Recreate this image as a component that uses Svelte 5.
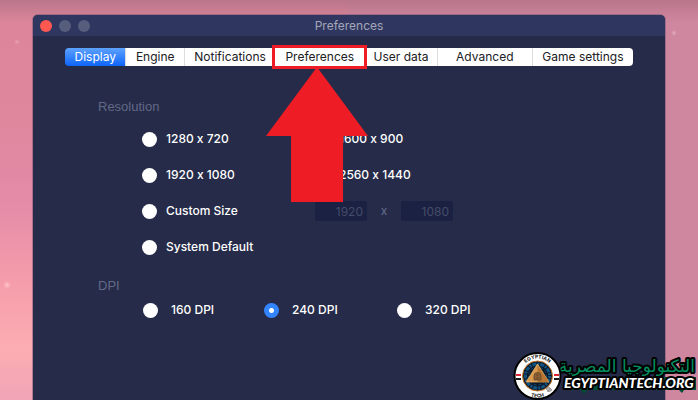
<script>
  const tabs = [
    { name: 'Display', width: 61 },
    { name: 'Engine', width: 58 },
    { name: 'Notifications', width: 91 },
    { name: 'Preferences', width: 90 },
    { name: 'User data', width: 72 },
    { name: 'Advanced', width: 95 },
    { name: 'Game settings', width: 101 }
  ];
  const dpis = [160, 240, 320];
  let active = $state('Display');
  let resolution = $state('');
  let dpi = $state(240);
</script>

<div class="desktop">
  <main class="window">
    <header>
      <div class="lights">
        <button class="close" aria-label="Close"></button>
        <button aria-label="Minimize"></button>
        <button aria-label="Zoom"></button>
      </div>
      <h1>Preferences</h1>
    </header>

    <nav>
      {#each tabs as tab}
        <button
          class:active={active === tab.name}
          class:marked={tab.name === 'Preferences'}
          style="flex-grow: {tab.width}"
          onclick={() => (active = tab.name)}>{tab.name}</button>
      {/each}
    </nav>

    <section class="resolution">
      <h2>Resolution</h2>
      <div class="grid">
        <label><input type="radio" name="res" value="720" bind:group={resolution} />1280 x 720</label>
        <label><input type="radio" name="res" value="900" bind:group={resolution} />1600 x 900</label>
        <label><input type="radio" name="res" value="1080" bind:group={resolution} />1920 x 1080</label>
        <label><input type="radio" name="res" value="1440" bind:group={resolution} />2560 x 1440</label>
        <label><input type="radio" name="res" value="custom" bind:group={resolution} />Custom Size</label>
        <div class="size">
          <input type="text" aria-label="Width" value="1920" disabled />
          <span>x</span>
          <input type="text" aria-label="Height" value="1080" disabled />
        </div>
        <label><input type="radio" name="res" value="default" bind:group={resolution} />System Default</label>
      </div>
    </section>

    <section class="dpi">
      <h2>DPI</h2>
      <div class="row">
        {#each dpis as value}
          <label><input type="radio" name="dpi" {value} bind:group={dpi} />{value} DPI</label>
        {/each}
      </div>
    </section>

    <svg class="arrow" width="104" height="136" viewBox="0 0 104 136" aria-hidden="true">
      <path d="M51 0 102 69H77V135H25V69H0Z" fill="#ee1c25" />
    </svg>
  </main>

  <svg class="mark" width="188" height="52" viewBox="0 0 188 52">
    <defs>
      <path id="top" d="M11 27a17.500 17.500 0 0 1 35 0" />
      <path id="bottom" d="M7 27a21.500 21.500 0 0 0 43 0" />
    </defs>
    <path d="M58 28H187V41H175L173 44 170 41H78L75 45 72 41H58Z" fill="#004c36" />
    <text class="arabic" x="186" y="23" direction="rtl">التكنولوجيا المصرية</text>
    <circle cx="28.500" cy="27" r="23" fill="#fff" stroke="#000" stroke-width="2" />
    <circle cx="28.500" cy="27" r="15" fill="#0a1828" stroke="#c97928" stroke-width="1" />
    <circle cx="28.500" cy="27" r="12" fill="none" stroke="#125583" stroke-width="3" stroke-dasharray="2 1 4 1" />
    <circle cx="28.500" cy="27" r="9" fill="none" stroke="#17466b" stroke-width="1" stroke-dasharray="3 2" />
    <path d="M28.500 15 40 33H17Z" fill="#d99a4e" stroke="#f0be74" stroke-width=".7" />
    <path d="M28.500 16v17H40Z" fill="#b87632" />
    <path d="M25 27a3.500 3.500 0 1 1 7 0v4h-7Zm2-1h3m-3 3h3" fill="#8f602f" stroke="#57452e" stroke-width=".8" />
    <path d="M7 25h5v2H7ZM45 25h5v2h-5Z" fill="#df2534" />
    <path d="M7 29h5v2H7ZM45 29h5v2h-5Z" fill="#161616" />
    <text class="ring"><textPath href="#top" startOffset="50%">EGYPTIAN</textPath></text>
    <text class="ring"><textPath href="#bottom" startOffset="50%">TECH</textPath></text>
    <path d="M37 40l3-2 3 3-3 2Zm1 3 4-4" fill="#bbb" stroke="#777" stroke-width=".6" />
    <text class="site" x="55" y="39">EGYPTIANTECH.ORG</text>
  </svg>
</div>

<style>
  :global(body) { margin: 0; }
  * { box-sizing: border-box; }
  .desktop {
    position: relative;
    display: flex;
    min-height: 100vh;
    padding: 15px 33px 0 33px;
    overflow: hidden;
    font: 12px/16px Inter, "Liberation Sans", sans-serif;
    font-feature-settings: "calt" 0;
    background:
      radial-gradient(circle at 7px 285px, #ffc4c8 0, transparent 4px),
      radial-gradient(circle at 17px 42px, #e9a0b0 0, transparent 3px),
      radial-gradient(circle at 674px 33px, #dfaabd 0, transparent 3px),
      linear-gradient(#b9768b, transparent 22px),
      linear-gradient(90deg, transparent 50%, #cf869f 50%),
      linear-gradient(#dc8599 0, #df879d 120px, #e38ba8 200px, #f49baa 275px, #fcadb3 350px, #f0a4b5 400px);
  }
  .window {
    position: relative;
    flex: 1;
    background: #252b48;
    border-radius: 5px 5px 0 0;
    box-shadow: 0 0 0 1px #71516f80;
  }
  header {
    display: grid;
    grid-template-columns: 1fr auto 1fr;
    align-items: center;
    height: 21px;
    padding: 0 7px;
    background: #2f365f;
    border-radius: 5px 5px 0 0;
  }
  h1 { margin: 0; font-size: 12px; font-weight: 400; color: #a4a7b9; }
  .lights { display: flex; gap: 7px; }
  .lights button { width: 12px; height: 12px; padding: 0; border: 0; border-radius: 50%; background: #565d7d; }
  .lights .close { background: #ff5850; }
  nav { display: flex; height: 18px; margin: 12px 32px 0; }
  nav button {
    flex: 1 1 0;
    padding: 0;
    border: 0;
    border-left: 1px solid #dcdce0;
    background: #fff;
    color: #202024;
    font: inherit;
    white-space: nowrap;
  }
  nav button:first-child { border: 0; border-radius: 4px 0 0 4px; }
  nav button:last-child { border-radius: 0 4px 4px 0; }
  nav .active { color: #fff; background: linear-gradient(#5da2ff, #0d65fa); }
  nav .marked { border: 0; outline: 3px solid #ee1c25; z-index: 1; }
  section { padding: 0 65px; }
  h2 { margin: 0; font: 13px/16px "Liberation Sans", Arial, sans-serif; color: #626987; }
  .resolution { padding-top: 33px; }
  .grid {
    display: grid;
    grid-template-columns: 173px 1fr;
    grid-auto-rows: 36px;
    align-items: center;
    padding: 6px 0 0 44px;
  }
  label { display: flex; align-items: center; gap: 9px; color: #fff; font-weight: 500; }
  input[type='radio'] {
    appearance: none;
    width: 15px;
    height: 15px;
    margin: 0;
    border-radius: 50%;
    background: #fff;
  }
  input[type='radio']:checked { background: radial-gradient(circle, #fff 2px, #3384ff 3px); }
  .size { display: flex; align-items: center; color: #68708f; }
  .size span { width: 34px; text-align: center; }
  .size input {
    width: 52px;
    height: 20px;
    padding: 0 4px;
    border: 0;
    border-radius: 2px;
    background: #1b2142;
    color: #454c69;
    font: inherit;
    text-align: right;
  }
  .dpi { padding-top: 13px; }
  .row { display: grid; grid-template-columns: 121px 133px 1fr; padding: 8px 0 0 45px; }
  .row label { gap: 13px; }
  .arrow { position: absolute; left: calc(50% - 83px); top: 52px; }
  .mark { position: absolute; right: 1px; bottom: -1px; }
  .arabic {
    font: 17px "DejaVu Sans", sans-serif;
    fill: #008f60;
    stroke: #000;
    stroke-width: 4px;
    paint-order: stroke;
    stroke-linejoin: round;
  }
  .site {
    font: italic 900 14px Lato, sans-serif;
    fill: #fff;
    stroke: #000;
    stroke-width: 4px;
    paint-order: stroke;
    stroke-linejoin: round;
  }
  .ring { font: 700 5px Inter, sans-serif; fill: #151515; text-anchor: middle; }
</style>
